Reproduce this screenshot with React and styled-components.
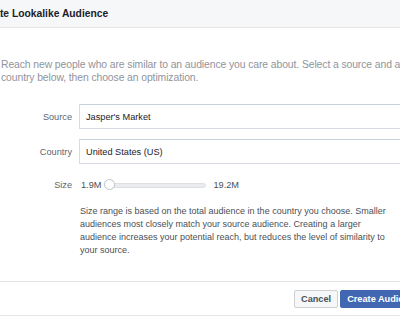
import styled, { createGlobalStyle } from "styled-components";

const Global = createGlobalStyle`
  html, body {
    margin: 0;
    padding: 0;
    background: #fff;
    overflow: hidden;
  }
  body {
    font-family: "Liberation Sans", Arial, sans-serif;
  }
`;

const Dialog = styled.div`
  width: 400px;
  height: 316px;
  overflow: hidden;
  display: flex;
  flex-direction: column;
  background: #fff;
`;

const Header = styled.div`
  height: 27px;
  flex: none;
  background: #f6f7f9;
  border-bottom: 1px solid #e5e5e5;
  display: flex;
  align-items: center;
`;

const Title = styled.h1`
  margin: 0 0 0 -23px;
  font-size: 10.3px;
  font-weight: bold;
  color: #1d2129;
  white-space: nowrap;
`;

const Body = styled.div`
  flex: 1;
  padding: 30px 0 0 1px;
`;

const Intro = styled.p`
  margin: 0;
  width: 420px;
  font-size: 10.4px;
  letter-spacing: -0.1px;
  line-height: 13px;
  color: #90949c;
`;

const Form = styled.div`
  margin-top: 20px;
  display: grid;
  grid-template-columns: 71px 1fr;
  column-gap: 7px;
  row-gap: 10px;
  align-items: center;
  font-size: 9.2px;
`;

const Label = styled.label`
  text-align: right;
  color: #606770;
  margin-top: ${({ $offset }) => $offset || 0}px;
`;

const Input = styled.div`
  height: 25px;
  box-sizing: border-box;
  margin-right: -2px;
  border: 1px solid #d7dbe6;
  border-top-color: #c9cfdc;
  display: flex;
  align-items: center;
  padding-left: 6px;
  color: #1d2129;
`;

const SizeRow = styled.div`
  display: flex;
  align-items: center;
  height: 20px;
  margin-top: 1px;
  padding-left: 2px;
  color: #4b4f56;
`;

const Track = styled.div`
  position: relative;
  width: 100px;
  height: 3px;
  margin: 0 7px 0 3px;
  background: #e9ebee;
  border: 1px solid #dddfe2;
  border-radius: 3px;
`;

const Thumb = styled.span`
  position: absolute;
  left: -1px;
  top: -5px;
  width: 9px;
  height: 9px;
  border-radius: 50%;
  background: #fff;
  border: 1px solid #bec3c9;
`;

const Help = styled.p`
  grid-column: 2;
  margin: 0 0 0 1px;
  width: 318px;
  font-size: 9px;
  line-height: 13px;
  color: #4b4f56;
`;

const Footer = styled.div`
  height: 33px;
  flex: none;
  border-top: 1px solid #e5e5e5;
  border-bottom: 1px solid #e5e5e5;
  display: flex;
  align-items: center;
  gap: 2px;
  padding-left: 294px;
  white-space: nowrap;
`;

const Button = styled.button`
  flex: none;
  height: 18px;
  padding: 0 6px;
  font-family: inherit;
  font-size: 9.2px;
  font-weight: bold;
  border-radius: 2px;
  border: 1px solid ${({ $primary }) => ($primary ? "#4267b2" : "#ced0d4")};
  background: ${({ $primary }) => ($primary ? "#4267b2" : "#f6f7f9")};
  color: ${({ $primary }) => ($primary ? "#fff" : "#4b4f56")};
`;

export default function App() {
  return (
    <>
      <Global />
      <Dialog>
        <Header>
          <Title>Create Lookalike Audience</Title>
        </Header>
        <Body>
          <Intro>
            Reach new people who are similar to an audience you care about. Select a source and a
            country below, then choose an optimization.
          </Intro>
          <Form>
            <Label>Source</Label>
            <Input>Jasper's Market</Input>
            <Label>Country</Label>
            <Input>United States (US)</Input>
            <Label $offset={1}>Size</Label>
            <SizeRow>
              1.9M
              <Track>
                <Thumb />
              </Track>
              19.2M
            </SizeRow>
            <Help>
              Size range is based on the total audience in the country you choose. Smaller
              audiences most closely match your source audience. Creating a larger audience
              increases your potential reach, but reduces the level of similarity to your source.
            </Help>
          </Form>
        </Body>
        <Footer>
          <Button>Cancel</Button>
          <Button $primary>Create Audience</Button>
        </Footer>
      </Dialog>
    </>
  );
}
